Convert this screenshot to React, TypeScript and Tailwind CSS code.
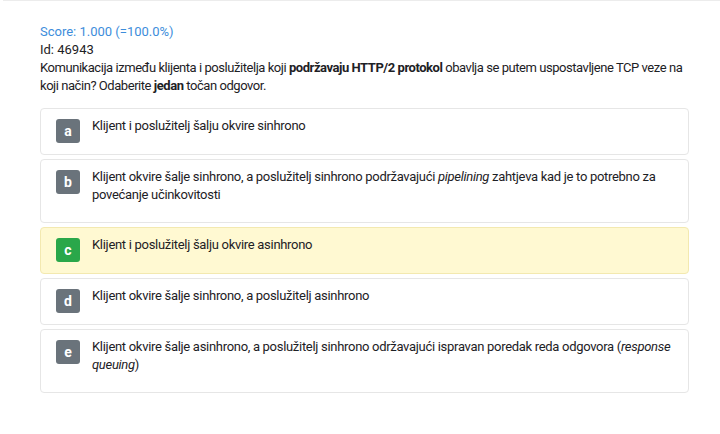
import React from "react";

type Option = {
  letter: string;
  content: React.ReactNode;
  correct?: boolean;
};

const options: Option[] = [
  { letter: "a", content: "Klijent i poslužitelj šalju okvire sinhrono" },
  {
    letter: "b",
    content: (
      <>
        Klijent okvire šalje sinhrono, a poslužitelj sinhrono podržavajući{" "}
        <em>pipelining</em> zahtjeva kad je to potrebno za povećanje
        učinkovitosti
      </>
    ),
  },
  {
    letter: "c",
    content: "Klijent i poslužitelj šalju okvire asinhrono",
    correct: true,
  },
  { letter: "d", content: "Klijent okvire šalje sinhrono, a poslužitelj asinhrono" },
  {
    letter: "e",
    content: (
      <>
        Klijent okvire šalje asinhrono, a poslužitelj sinhrono održavajući
        ispravan poredak reda odgovora (<em>response queuing</em>)
      </>
    ),
  },
];

export default function App() {
  return (
    <div
      className="min-h-[434px] bg-white border-t border-[#ececec] ml-[3px] text-[#1d2125]"
      style={{ fontFamily: 'Roboto, "Noto Sans", sans-serif' }}
    >
      <div className="pl-[37px] pr-[31px] pt-[22px]">
        <div className="text-[13px] leading-[18px]">
          <div className="text-[#3d8ddb]">Score: 1.000 (=100.0%)</div>
          <div>Id: 46943</div>
          <div className="tracking-[-0.45px]">
            Komunikacija između klijenta i poslužitelja koji{" "}
            <strong className="font-bold">podržavaju HTTP/2 protokol</strong>{" "}
            obavlja se putem uspostavljene TCP veze na koji način? Odaberite{" "}
            <strong className="font-bold">jedan</strong> točan odgovor.
          </div>
        </div>

        <div className="mt-[13px] flex flex-col gap-1">
          {options.map((o) => (
            <div
              key={o.letter}
              className={
                o.correct
                  ? "flex items-start gap-3 rounded border border-[#f3e9b0] bg-[#fff9d2] pl-[15px] pr-4 pt-2 pb-[11px]"
                  : "flex items-start gap-3 rounded border border-[#e6e6e6] bg-white pl-[15px] pr-4 pt-2 pb-[11px]"
              }
            >
              <div
                className={
                  o.correct
                    ? "mt-[2px] flex h-6 w-6 shrink-0 items-center justify-center rounded-[3px] bg-[#2aa74a] text-[14px] font-bold text-white"
                    : "mt-[2px] flex h-6 w-6 shrink-0 items-center justify-center rounded-[3px] bg-[#6a737b] text-[14px] font-bold text-white"
                }
              >
                {o.letter}
              </div>
              <div className="pb-[7px] text-[13px] leading-[18px] tracking-[-0.3px]">
                {o.content}
              </div>
            </div>
          ))}
        </div>
      </div>
    </div>
  );
}
